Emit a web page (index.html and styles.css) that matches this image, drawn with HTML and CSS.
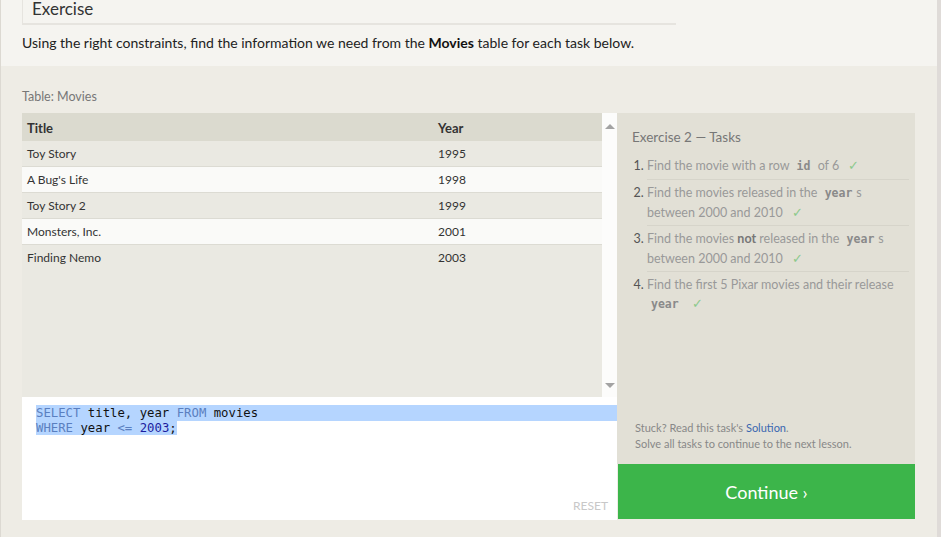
FILE: index.html
```html
<!DOCTYPE html>
<html lang="en">
<head>
<meta charset="utf-8">
<title>Exercise 2 — Tasks</title>
<link rel="stylesheet" href="styles.css">
</head>
<body>
<div class="page">
  <section class="intro">
    <div class="ex-head"><h2>Exercise</h2></div>
    <p>Using the right constraints, find the information we need from the <strong>Movies</strong> table for each task below.</p>
  </section>
  <section class="workspace">
    <div class="table-label">Table: Movies</div>
    <div class="grid">
      <div class="left">
        <div class="table-wrap">
          <div class="table-area">
            <table class="movies">
              <thead>
                <tr><th class="c-title">Title</th><th>Year</th></tr>
              </thead>
              <tbody>
                <tr><td>Toy Story</td><td>1995</td></tr>
                <tr><td>A Bug's Life</td><td>1998</td></tr>
                <tr><td>Toy Story 2</td><td>1999</td></tr>
                <tr><td>Monsters, Inc.</td><td>2001</td></tr>
                <tr><td>Finding Nemo</td><td>2003</td></tr>
              </tbody>
            </table>
          </div>
          <div class="scrollbar">
            <span class="arrow up"></span>
            <span class="arrow down"></span>
          </div>
        </div>
        <div class="editor">
          <div class="code">
            <div class="line sel-full"><span class="kw">SELECT</span> title, year <span class="kw">FROM</span> movies</div>
            <div class="line"><span class="sel"><span class="kw">WHERE</span> year <span class="kw">&lt;=</span> <span class="num">2003</span>;</span></div>
          </div>
          <div class="reset">RESET</div>
        </div>
      </div>
      <div class="right">
        <div class="panel">
          <h3 class="tasks-title">Exercise 2 — Tasks</h3>
          <ol class="tasks">
            <li>Find the movie with a row <code>id</code> of 6 <span class="check">✓</span></li>
            <li>Find the movies released in the <code>year</code>s<br>between 2000 and 2010 <span class="check">✓</span></li>
            <li>Find the movies <strong>not</strong> released in the <code>year</code>s<br>between 2000 and 2010 <span class="check">✓</span></li>
            <li>Find the first 5 Pixar movies and their release<br><code>year</code> <span class="check">✓</span></li>
          </ol>
          <div class="help">
            <div>Stuck? Read this task's <a href="#">Solution</a>.</div>
            <div>Solve all tasks to continue to the next lesson.</div>
          </div>
        </div>
        <button class="continue">Continue ›</button>
      </div>
    </div>
  </section>
</div>
</body>
</html>
```

FILE: styles.css
```css
* { box-sizing: border-box; }

html, body {
  margin: 0;
  padding: 0;
  height: 100%;
  overflow: hidden;
}

body {
  font-family: "Lato", "Open Sans", sans-serif;
  color: #333;
  background: #eeece5;
}

.page {
  width: 941px;
  min-height: 537px;
  border-left: 1px solid #dcd9d2;
  border-right: 4px solid #dfdbd8;
  background: #eeece5;
}

/* intro */
.intro {
  background: #f5f4f0;
  padding: 0 21px 14px 21px;
}

.ex-head {
  width: 654px;
  padding: 0 0 6px 9px;
  border-left: 1px solid #e6e4df;
  border-bottom: 2px solid #e6e4df;
}

.ex-head h2 {
  margin: 0;
  font-size: 17px;
  line-height: 17px;
  font-weight: 400;
  color: #333;
}

.intro p {
  margin: 9px 0 0 0;
  font-size: 14px;
  line-height: 18px;
  color: #222;
}

.intro p strong { font-weight: 700; color: #111; }

/* workspace */
.workspace {
  padding: 23px 22px 18px 21px;
}

.table-label {
  font-size: 12.5px;
  line-height: 16px;
  color: #777;
  margin-bottom: 8px;
}

.grid {
  display: grid;
  grid-template-columns: 595px 298px;
  align-items: start;
}

.table-wrap {
  display: flex;
  height: 284px;
}

.table-area {
  width: 580px;
  background: #eae9e2;
}

.scrollbar {
  width: 15px;
  background: #fcfcfb;
  display: flex;
  flex-direction: column;
  justify-content: space-between;
  align-items: center;
  padding: 11px 0 9px 0;
}

.arrow {
  width: 0;
  height: 0;
  border-left: 5px solid transparent;
  border-right: 5px solid transparent;
}
.arrow.up { border-bottom: 5px solid #a3a3a3; }
.arrow.down { border-top: 5px solid #a3a3a3; }

.movies {
  width: 100%;
  border-collapse: collapse;
  font-size: 12px;
  color: #333;
}

.movies th {
  background: #dbdacf;
  height: 28px;
  padding: 2px 5px 0 5px;
  text-align: left;
  font-weight: 700;
  font-size: 13px;
  color: #333;
}

.movies th.c-title { width: 411px; }

.movies td {
  height: 26px;
  padding: 0 5px;
  border-top: 1px solid #dcdbd3;
}

.movies tbody tr:first-child td { border-top: none; height: 25px; }

.movies tbody tr:nth-child(odd) { background: #eae9e2; }
.movies tbody tr:nth-child(even) { background: #fafaf8; }

/* editor */
.editor {
  height: 123px;
  background: #fff;
  display: flex;
  flex-direction: column;
  padding: 8px 0 7px 14px;
}

.code {
  font-family: "DejaVu Sans Mono", "Liberation Mono", monospace;
  font-size: 12.3px;
  line-height: 15px;
  color: #111;
}

.line { white-space: pre; }

.sel-full, .sel { background: #b5d5ff; }
.sel-full { padding-top: 1px; }

.kw { color: #5a7fc0; }
.num { color: #1c1ca0; }

.reset {
  margin-top: auto;
  align-self: flex-end;
  padding-right: 9px;
  font-size: 12px;
  line-height: 14px;
  color: #c8c8c8;
}

/* right panel */
.right {
  display: flex;
  flex-direction: column;
}

.panel {
  height: 351px;
  background: #e2e0d6;
  padding: 15px 6px 12px 15px;
  display: flex;
  flex-direction: column;
}

.tasks-title {
  margin: 0;
  font-size: 13.5px;
  line-height: 18px;
  font-weight: 400;
  color: #777;
}

.tasks {
  margin: 7px 0 0 0;
  padding: 0 0 0 15px;
  font-size: 12.5px;
  line-height: 19px;
  color: #999;
}

.tasks li {
  padding: 3px 0 3px 0;
  border-bottom: 1px solid #d6d4ca;
}

.tasks li:last-child { border-bottom: none; }

.tasks li::marker { color: #555; }

.tasks strong { color: #777; font-weight: 700; }

.tasks code {
  font-family: "DejaVu Sans Mono", "Liberation Mono", monospace;
  font-weight: 700;
  font-size: 11.5px;
  color: #8a8a8a;
  padding: 0 4px;
}

.check {
  color: #8cc98c;
  margin-left: 6px;
}

.help {
  margin-top: auto;
  font-size: 11px;
  line-height: 16px;
  color: #888;
  padding-left: 3px;
}

.help a { color: #3a67b0; text-decoration: none; }

.continue {
  height: 55px;
  width: 297px;
  margin-left: 1px;
  border: none;
  background: #3cb54a;
  color: #fff;
  font-family: "Lato", "Open Sans", sans-serif;
  font-size: 18px;
  cursor: pointer;
}
```
